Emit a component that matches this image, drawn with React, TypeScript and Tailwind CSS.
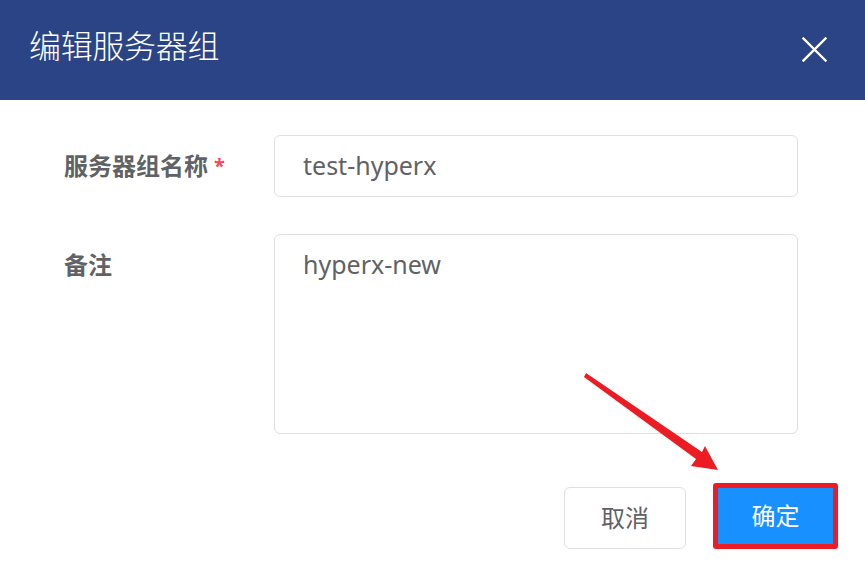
import React from "react";

const font = {
  fontFamily: '"Noto Sans", "Noto Sans CJK SC", sans-serif',
};

function CloseIcon() {
  return (
    <svg width="25" height="25" viewBox="0 0 25 25" fill="none">
      <path
        d="M1.5 1.5 L23.5 23.5 M23.5 1.5 L1.5 23.5"
        stroke="#ffffff"
        strokeWidth="2.4"
        strokeLinecap="square"
      />
    </svg>
  );
}

function Arrow() {
  // red annotation arrow pointing at the confirm button
  return (
    <svg
      className="absolute left-0 top-0 pointer-events-none"
      width="865"
      height="577"
      viewBox="0 0 865 577"
    >
      <polygon
        points="586,373 702,452 705,446 718,470 691,466 696,459 584,377"
        fill="#ec1c24"
      />
    </svg>
  );
}

export default function App() {
  return (
    <div className="relative w-[865px] h-[577px] bg-white overflow-hidden" style={font}>
      <div className="h-[100px] bg-[#2a4486] flex items-start justify-between pl-[29px] pr-[38px]">
        <h1 className="mt-[23px] text-[32px] leading-[46px] font-light text-white tracking-[-0.3px]">
          编辑服务器组
        </h1>
        <button className="mt-[37px]">
          <CloseIcon />
        </button>
      </div>

      <div className="pl-[64px] pr-[67px]">
        <div className="mt-[35px] flex items-center">
          <label className="w-[210px] text-[24px] font-bold text-[#606266] flex items-center">
            服务器组名称
            <span className="ml-[6px] text-[#f5475a] text-[20px] font-bold">*</span>
          </label>
          <div className="w-[524px] h-[62px] border border-[#dcdfe6] rounded-[6px] flex items-center pl-[28px] text-[25px] text-[#606266]">
            test-hyperx
          </div>
        </div>

        <div className="mt-[37px] flex items-start">
          <label className="w-[210px] mt-[15px] text-[24px] font-bold text-[#606266] leading-[32px]">
            备注
          </label>
          <div className="w-[524px] h-[200px] border border-[#dcdfe6] rounded-[6px] pl-[28px] pt-[11px] text-[25px] leading-[36px] text-[#606266]">
            hyperx-new
          </div>
        </div>
      </div>

      <div className="mt-[53px] flex justify-end items-start pr-[27px] gap-[27px]">
        <button className="w-[122px] h-[62px] border border-[#dcdfe6] rounded-[6px] text-[24px] text-[#606266] bg-white">
          取消
        </button>
        <div className="-mt-[4px] w-[125px] h-[66px] border-[5px] border-[#ec1c24] rounded-[3px] bg-[#1890ff] flex items-center justify-center text-[24px] text-white">
          确定
        </div>
      </div>

      <Arrow />
    </div>
  );
}
